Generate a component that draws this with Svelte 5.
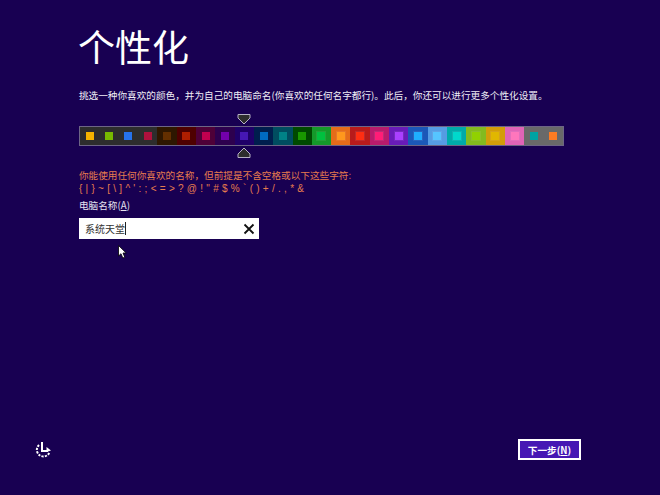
<script>
  const cells = [
    ['#2d2d2d','#f4b300'],['#2d2d2d','#78ba00'],['#2d2d2d','#2673ec'],['#2d2d2d','#ae113d'],
    ['#2e1700','#632f00'],['#4e0000','#b01e00'],['#4e0038','#c1004f'],['#2d004e','#7200ac'],
    ['#1f0068','#4617b4'],['#001e4e','#006ac1'],['#004d60','#008287'],['#004a00','#199900'],
    ['#15992a','#00c13f',1],['#e56c19','#ff981d',1],['#b81b1b','#ff2e12',1],['#b81b6c','#ff1d77',1],
    ['#691bb8','#aa40ff',1],['#1b58b8','#1faeff',1],['#569ce3','#56c5ff',1],['#00aaaa','#00d8cc',1],
    ['#83ba1f','#91d100',1],['#d39d09','#e1b700',1],['#e064b7','#ff76bc',1],['#696969','#00a3a3'],['#696969','#fe7c22']
  ];
  const rules = '{ | } ~ [ \\ ] ^ \' : ; < = > ? @ ! " # $ % ` ( ) + / . , * &';
</script>

<div class="page">
  <main class="content">
    <h1>个性化</h1>
    <p class="desc">挑选一种你喜欢的颜色，并为自己的电脑命名(你喜欢的任何名字都行)。此后，你还可以进行更多个性化设置。</p>
    <div class="picker">
      <svg class="arrow top" width="14" height="11" viewBox="0 0 14 11"><path d="M1 .5H13V4L7 10L1 4Z" fill="#2d2d2d" stroke="#b5b0c4" stroke-width="1"/></svg>
      <div class="bar">
        {#each cells as c}
          <div class="cell" style="background:{c[0]}"><i class:halo={c[2]} style="background:{c[1]}"></i></div>
        {/each}
      </div>
      <svg class="arrow bottom" width="14" height="11" viewBox="0 0 14 11"><path d="M1 10.5H13V7L7 1L1 7Z" fill="#2d2d2d" stroke="#b5b0c4" stroke-width="1"/></svg>
    </div>
    <p class="warn">你能使用任何你喜欢的名称，但前提是不含空格或以下这些字符:<br /><span class="rules">{rules}</span></p>
    <label class="name-label" for="pc">电脑名称(<u>A</u>)</label>
    <div class="field">
      <span class="value" id="pc">系统天堂</span><span class="caret"></span>
      <svg class="clear" width="12" height="12" viewBox="0 0 12 12"><path d="M1.5 1.5L10.5 10.5M10.5 1.5L1.5 10.5" stroke="#111" stroke-width="1.8" fill="none"/></svg>
    </div>
  </main>
  <footer class="foot">
    <svg class="ease" width="18" height="18" viewBox="0 0 18 18" fill="none" stroke="#fff" stroke-width="2">
      <path d="M5 4A6.6 6.6 0 1 0 15.5 11.5" stroke-dasharray="2.2 1.2"/>
      <path d="M8 1V10H14"/>
      <path d="M12.5 6L17 9.5L12.5 11Z" fill="#fff" stroke-width="0"/>
    </svg>
    <button class="next">下一步(<u>N</u>)</button>
  </footer>
  <svg class="cursor" width="10" height="14" viewBox="0 0 10 14"><path d="M.5.5V11L3 8.7L4.8 13L6.8 12.2L5 8H8.2Z" fill="#fff" stroke="#000" stroke-width=".8"/></svg>
</div>

<style>
  :global(body) { margin: 0; background: #180052; }
  .page {
    position: relative;
    width: 660px;
    height: 495px;
    box-sizing: border-box;
    display: flex;
    flex-direction: column;
    justify-content: space-between;
    background: #180052;
    color: #fff;
    font-family: "Noto Sans CJK SC", "Liberation Sans", sans-serif;
    overflow: hidden;
  }
  .content { padding: 23px 96px 0 79px; }
  h1 { margin: 0 0 0 -1px; font-size: 37px; line-height: 46px; font-weight: 400; }
  .desc { margin: 19px 0 0; font-size: 9.65px; line-height: 14px; color: #f0eef6; white-space: nowrap; }
  .picker { position: relative; margin: 12px 0 0; display: flex; flex-direction: column; width: 485px; }
  .arrow { align-self: flex-start; margin-left: 158px; display: block; }
  .bar {
    width: 485px; height: 20px; box-sizing: border-box;
    display: grid; grid-template-columns: repeat(25, 1fr);
    margin: 1px 0 1px;
    border: 1px solid #6d6585;
  }
  .cell { display: flex; align-items: center; justify-content: center; }
  .cell i { display: block; width: 8px; height: 8px; }
  .cell i.halo { box-shadow: 0 0 0 1px rgba(255, 255, 255, .07); }
  .warn { margin: 11px 0 0; font-size: 9.65px; line-height: 13px; color: #e67c4e; white-space: nowrap; }
  .rules { font-family: "Liberation Sans", sans-serif; font-size: 10px; letter-spacing: .25px; }
  .name-label { display: block; margin-top: 3px; font-size: 9.65px; line-height: 14px; color: #e6e2f0; }
  .field {
    margin-top: 6px; width: 180px; height: 21px; box-sizing: border-box;
    background: #fff; display: flex; align-items: center; padding-left: 6px;
    font-size: 10px; color: #333;
  }
  .caret { width: 1px; height: 13px; background: #222; }
  .clear { margin-left: auto; margin-right: 4px; }
  .foot { display: flex; align-items: center; justify-content: space-between; padding: 0 79px 35px 34px; }
  .ease { display: block; }
  .next {
    width: 63px; height: 21px; padding: 0; box-sizing: border-box;
    background: #4617b4; border: 2px solid #fff; color: #fff;
    font: 700 9.65px "Noto Sans CJK SC", sans-serif;
  }
  .cursor { position: absolute; left: 118px; top: 245px; }
</style>
